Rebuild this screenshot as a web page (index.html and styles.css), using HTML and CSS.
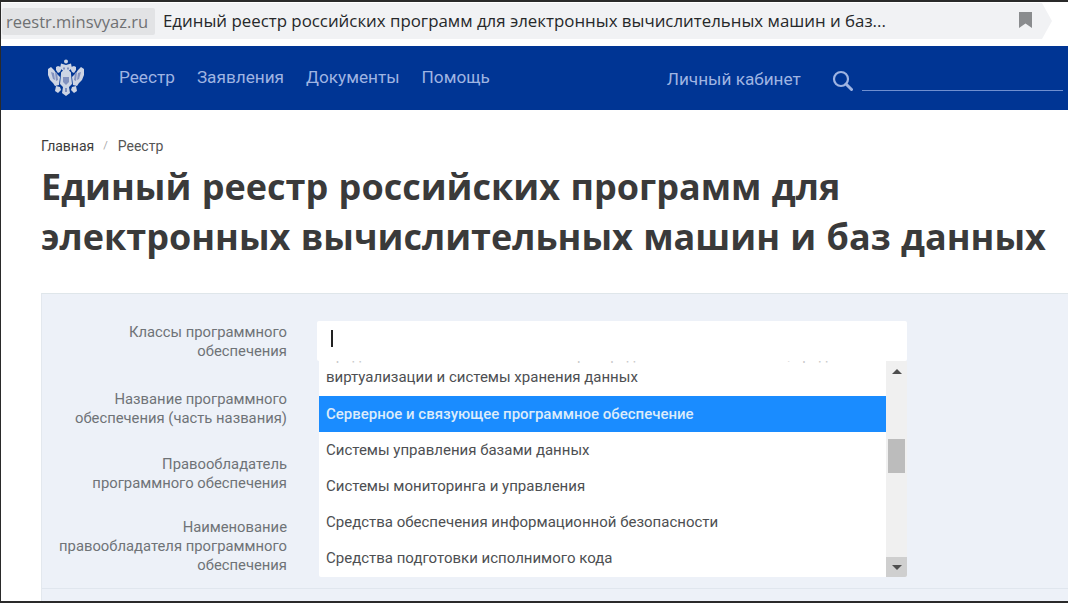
FILE: index.html
```html
<!DOCTYPE html>
<html lang="ru">
<head>
<meta charset="utf-8">
<title>Единый реестр</title>
<link rel="stylesheet" href="styles.css">
</head>
<body>
<div class="frame">
  <div class="addr-wrap">
    <div class="addr">
      <span class="chip">reestr.minsvyaz.ru</span>
      <span class="page-title">Единый реестр российских программ для электронных вычислительных машин и баз...</span>
      <svg class="bookmark" width="13" height="16" viewBox="0 0 13 16"><path d="M0 0H13V16L6.5 11.5L0 16Z" fill="#8a8c8e"/></svg>
    </div>
  </div>
  <header class="nav">
    <svg class="eagle" width="36" height="38" viewBox="0 0 36 38">
      <g fill="#cdd4e4">
        <circle cx="18" cy="2.5" r="2"/>
        <path d="M13 4.5l5 1.5 5-1.5 1 5-3 2 2 2v3h-10v-3l2-2-3-2z"/>
        <path d="M8 8l2-1 3 1v3l-1 2-2 1-2-3z"/>
        <path d="M28 8l-2-1-3 1v3l1 2 2 1 2-3z"/>
        <path d="M0 10l3-2 3 3 2 3 4 4-1 8-4 1-2-3-3-3-2-5z"/>
        <path d="M36 10l-3-2-3 3-2 3-4 4 1 8 4 1 2-3 3-3 2-5z"/>
        <path d="M13 15h10l1 10-3 3 1 6-4 3-4-3 1-6-3-3z"/>
        <path d="M8 27l4 1 1 3-3 3-3-2z"/>
        <path d="M28 27l-4 1-1 3 3 3 3-2z"/>
      </g>
      <g fill="#8291bf">
        <path d="M3 13l3 1 1 7-2-1z"/>
        <path d="M33 13l-3 1-1 7 2-1z"/>
        <path d="M7 13l2 1 1 7-2 1z"/>
        <path d="M29 13l-2 1-1 7 2 1z"/>
        <path d="M15 18h6v5l-3 3-3-3z"/>
        <rect x="15" y="8.5" width="2" height="2"/>
        <rect x="19" y="8.5" width="2" height="2"/>
        <rect x="17" y="29" width="2" height="4"/>
      </g>
    </svg>
    <nav class="menu">
      <a class="menu-item">Реестр</a>
      <a class="menu-item">Заявления</a>
      <a class="menu-item">Документы</a>
      <a class="menu-item">Помощь</a>
    </nav>
    <a class="cabinet">Личный кабинет</a>
    <svg class="search-icon" width="21" height="21" viewBox="0 0 21 21" fill="none" stroke="#9fb4e2"><circle cx="9" cy="9" r="7" stroke-width="2.2"/><path d="M14 14L19.5 19.5" stroke-width="3" stroke-linecap="round"/></svg>
    <div class="search-line"></div>
  </header>
  <main class="content">
    <div class="crumbs"><a class="crumb-home">Главная</a><span class="crumb-sep">/</span><a class="crumb-cur">Реестр</a></div>
    <h1 class="title">Единый реестр российских программ для<br>электронных вычислительных машин и баз данных</h1>
    <section class="panel">
      <form class="form">
        <div class="row row-a">
          <label class="label">Классы программного<br>обеспечения</label>
          <div class="field"><span class="caret"></span></div>
          <div class="dropdown">
            <ul class="list">
              <li class="opt opt-two"><span class="opt-first">Средства обеспечения облачных и распределенных вычислений, средства</span><span class="opt-line">виртуализации и системы хранения данных</span></li>
              <li class="opt opt-active">Серверное и связующее программное обеспечение</li>
              <li class="opt">Системы управления базами данных</li>
              <li class="opt">Системы мониторинга и управления</li>
              <li class="opt">Средства обеспечения информационной безопасности</li>
              <li class="opt">Средства подготовки исполнимого кода</li>
            </ul>
            <div class="scrollbar">
              <div class="sb-btn"><span class="arrow-up"></span></div>
              <div class="sb-track"><div class="sb-thumb"></div></div>
              <div class="sb-btn sb-btn-down"><span class="arrow-down"></span></div>
            </div>
          </div>
        </div>
        <div class="row row-b">
          <label class="label">Название программного<br>обеспечения (часть названия)</label>
        </div>
        <div class="row row-c">
          <label class="label">Правообладатель<br>программного обеспечения</label>
        </div>
        <div class="row row-d">
          <label class="label">Наименование<br>правообладателя программного<br>обеспечения</label>
        </div>
      </form>
    </section>
  </main>
</div>
</body>
</html>
```
FILE: styles.css
```css
* { box-sizing: border-box; }
html, body { margin: 0; padding: 0; }
body {
  width: 1068px;
  height: 603px;
  overflow: hidden;
  background: #fff;
  font-family: Roboto, "Liberation Sans", sans-serif;
}
.frame {
  width: 1068px;
  height: 603px;
  border-top: 2px solid #2a2a2a;
  border-bottom: 2px solid #2a2a2a;
  border-left: 1px solid #2a2a2a;
  display: flex;
  flex-direction: column;
  overflow: hidden;
}
.addr-wrap { height: 44px; flex: none; padding-top: 1px; background: #fff; }
.addr {
  width: 1051px;
  height: 36px;
  background: #f1f2f4;
  clip-path: polygon(0 0, 1041px 0, 100% 50%, 1041px 100%, 0 100%);
  display: flex;
  align-items: center;
  padding-left: 1px;
  padding-bottom: 2px;
}
.chip {
  width: 153px;
  height: 27px;
  margin-top: 2px;
  background: #e2e3e5;
  border-radius: 2px;
  color: #6f7173;
  font: 16.5px/27px "Open Sans", sans-serif;
  padding-left: 4px;
  white-space: nowrap;
}
.page-title {
  margin-left: 8px;
  font: 16.85px/27px "Open Sans", sans-serif;
  color: #26282a;
  white-space: nowrap;
}
.bookmark { margin-left: auto; margin-right: 20px; }
.nav {
  height: 64px;
  flex: none;
  background: #003594;
  display: flex;
  align-items: center;
  padding-left: 47px;
}
.eagle { flex: none; filter: blur(0.6px); margin-top: -1px; }
.menu { display: flex; gap: 22px; margin-left: 35px; }
.menu-item { color: #9fb4e2; font-size: 17.2px; line-height: 20px; margin-top: -2px; }
.cabinet { color: #9fb4e2; font-size: 17.2px; line-height: 20px; margin-left: 177px; margin-top: 2px; }
.search-icon { margin-left: 31px; margin-top: 5px; flex: none; }
.search-line { width: 201px; height: 1px; background: #6f8fd0; margin-left: 9px; margin-top: 24px; }
.content { flex: 1; display: flex; flex-direction: column; min-height: 0; }
.crumbs {
  margin: 27px 0 0 40px;
  font-size: 14px;
  line-height: 18px;
  display: flex;
  align-items: center;
}
.crumb-home { color: #3d3d3d; }
.crumb-sep { color: #a9a9a9; margin: 0 10px 0 9px; font-size: 11px; }
.crumb-cur { color: #555; }
.title {
  margin: 7px 0 0 40px;
  font-family: "Open Sans", sans-serif;
  font-weight: 700;
  font-size: 36px;
  word-spacing: 1px;
  line-height: 50px;
  color: #3a3a3a;
  white-space: nowrap;
}
.panel {
  flex: 1;
  margin: 31px 0 0 40px;
  background: #edf1f8;
  border-top: 1px solid #dfe6ea;
  border-left: 1px solid #e3e8ee;
}
.form { padding-top: 29px; border-bottom: 1px solid #e0e6ee; height: 295px; }
.row { display: grid; grid-template-columns: 245px 590px; column-gap: 30px; position: relative; }
.row-a { height: 67px; }
.row-b { height: 65px; }
.row-c { height: 63px; }
.label {
  grid-column: 1;
  text-align: right;
  color: #6f7377;
  font-size: 14.8px;
  line-height: 19px;
}
.field {
  grid-column: 2;
  height: 40px;
  background: #fff;
  border-radius: 2px;
  display: flex;
  align-items: center;
  padding-left: 14px;
  margin-top: -2px;
}
.caret { width: 2px; height: 17px; margin-top: -5px; background: #222; }
.dropdown {
  position: absolute;
  left: 277px;
  top: 38px;
  width: 588px;
  height: 216px;
  background: #fff;
  display: flex;
  overflow: hidden;
  border-radius: 0 0 2px 2px;
}
.list {
  list-style: none;
  margin: 0;
  padding: 0;
  width: 567px;
  flex: none;
  color: #4d4f52;
  font-size: 15px;
}
.opt { height: 36px; line-height: 36px; padding-left: 7px; white-space: nowrap; }
.opt-two {
  height: 35px;
  padding-bottom: 9px;
  display: flex;
  flex-direction: column;
  justify-content: flex-end;
  overflow: hidden;
}
.opt-first { display: block; flex: none; line-height: 20px; margin-bottom: 2px; color: #c9c9c9; }
.opt-line { display: block; flex: none; line-height: 20px; }
.opt-active { background: #1a8cff; color: #dcebfa; font-weight: 500; }
.scrollbar { flex: 1; display: flex; flex-direction: column; background: #f0f0f0; }
.sb-btn { height: 20px; display: flex; align-items: center; justify-content: center; flex: none; }
.sb-btn-down { background: #cfcfcf; }
.arrow-up { border: 5px solid transparent; border-top: 0; border-bottom: 5px solid #4e4e4e; }
.arrow-down { border: 5px solid transparent; border-bottom: 0; border-top: 5px solid #4e4e4e; }
.sb-track { flex: 1; padding: 58px 2px 0; }
.sb-thumb { height: 34px; background: #bcbcbc; }
```
